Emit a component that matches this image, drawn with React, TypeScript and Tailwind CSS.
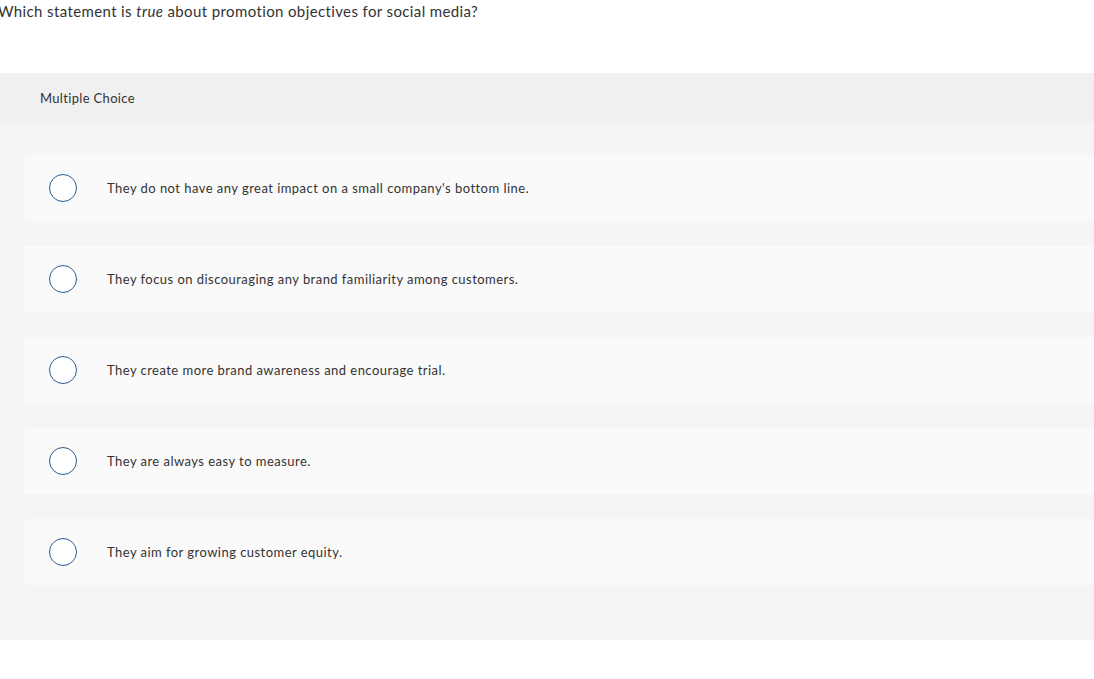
const choices = [
  "They do not have any great impact on a small company's bottom line.",
  'They focus on discouraging any brand familiarity among customers.',
  'They create more brand awareness and encourage trial.',
  'They are always easy to measure.',
  'They aim for growing customer equity.',
];

export default function App() {
  return (
    <div className="min-h-screen bg-white text-[#333] font-['Lato','Open_Sans',sans-serif] overflow-hidden">
      <p className="-ml-[2px] pt-[1px] text-[15px] leading-[20px] tracking-[0.38px]">
        Which statement is <em>true</em> about promotion objectives for social media?
      </p>

      <div className="mt-[52px] w-[1120px]">
        <div className="h-[50px] bg-[#f0f0f0] pl-[40px] pt-[1px] flex items-center text-[13px] tracking-[0.33px]">
          Multiple Choice
        </div>
        <div className="bg-[#f5f5f5] pt-[32px] pb-[55px] pl-[24px] flex flex-col gap-[25px]">
          {choices.map((text) => (
            <label
              key={text}
              className="h-[66px] bg-[#fafafa] rounded-[3px] flex items-center cursor-pointer"
            >
              <span className="ml-[25px] w-[28px] h-[28px] rounded-full border-[1.5px] border-[#2c5c92] bg-white shrink-0" />
              <span className="ml-[30px] pt-[2px] text-[13px] tracking-[0.46px] text-[#333]">{text}</span>
            </label>
          ))}
        </div>
      </div>
    </div>
  );
}
